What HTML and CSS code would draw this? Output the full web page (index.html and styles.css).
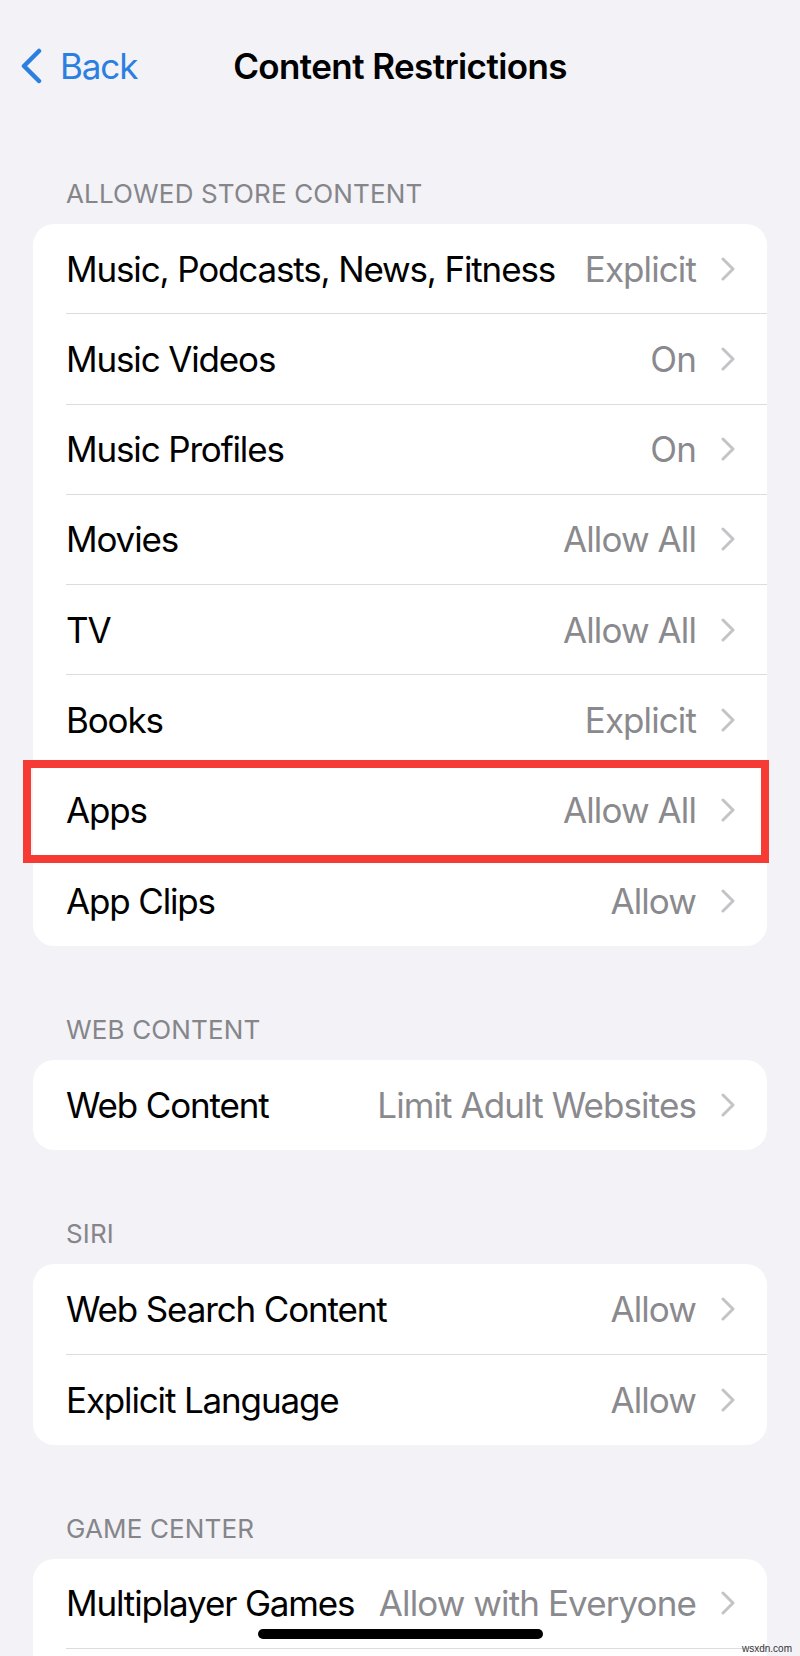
FILE: index.html
```html
<!DOCTYPE html>
<html lang="en">
<head>
    <meta charset="UTF-8">
    <meta name="viewport" content="width=device-width, initial-scale=1.0">
    <title>Content Restrictions</title>
    <link rel="stylesheet" href="styles.css">
</head>
<body>
    <div class="screen">
        <header class="nav">
            <a class="back" href="#">
                <svg class="back-icon" width="24" height="36" viewBox="0 0 24 36">
                    <path d="M20 3 L5 18 L20 33" />
                </svg>
                <span>Back</span>
            </a>
            <h1 class="nav-title">Content Restrictions</h1>
            <div></div>
        </header>

        <section class="group first">
            <h2 class="group-title">ALLOWED STORE CONTENT</h2>
            <ul class="card">
                <li class="row">
                    <div class="row-inner">
                        <span class="label">Music, Podcasts, News, Fitness</span>
                        <span class="value">Explicit</span>
                        <svg class="chev" width="14" height="24" viewBox="0 0 14 24"><path d="M2 2 L12 12 L2 22" /></svg>
                    </div>
                </li>
                <li class="row">
                    <div class="row-inner">
                        <span class="label">Music Videos</span>
                        <span class="value">On</span>
                        <svg class="chev" width="14" height="24" viewBox="0 0 14 24"><path d="M2 2 L12 12 L2 22" /></svg>
                    </div>
                </li>
                <li class="row">
                    <div class="row-inner">
                        <span class="label">Music Profiles</span>
                        <span class="value">On</span>
                        <svg class="chev" width="14" height="24" viewBox="0 0 14 24"><path d="M2 2 L12 12 L2 22" /></svg>
                    </div>
                </li>
                <li class="row">
                    <div class="row-inner">
                        <span class="label">Movies</span>
                        <span class="value">Allow All</span>
                        <svg class="chev" width="14" height="24" viewBox="0 0 14 24"><path d="M2 2 L12 12 L2 22" /></svg>
                    </div>
                </li>
                <li class="row">
                    <div class="row-inner">
                        <span class="label">TV</span>
                        <span class="value">Allow All</span>
                        <svg class="chev" width="14" height="24" viewBox="0 0 14 24"><path d="M2 2 L12 12 L2 22" /></svg>
                    </div>
                </li>
                <li class="row">
                    <div class="row-inner">
                        <span class="label">Books</span>
                        <span class="value">Explicit</span>
                        <svg class="chev" width="14" height="24" viewBox="0 0 14 24"><path d="M2 2 L12 12 L2 22" /></svg>
                    </div>
                </li>
                <li class="row">
                    <div class="row-inner">
                        <span class="label">Apps</span>
                        <span class="value">Allow All</span>
                        <svg class="chev" width="14" height="24" viewBox="0 0 14 24"><path d="M2 2 L12 12 L2 22" /></svg>
                    </div>
                    <div class="highlight"></div>
                </li>
                <li class="row">
                    <div class="row-inner">
                        <span class="label">App Clips</span>
                        <span class="value">Allow</span>
                        <svg class="chev" width="14" height="24" viewBox="0 0 14 24"><path d="M2 2 L12 12 L2 22" /></svg>
                    </div>
                </li>
            </ul>
        </section>

        <section class="group">
            <h2 class="group-title">WEB CONTENT</h2>
            <ul class="card">
                <li class="row">
                    <div class="row-inner">
                        <span class="label">Web Content</span>
                        <span class="value">Limit Adult Websites</span>
                        <svg class="chev" width="14" height="24" viewBox="0 0 14 24"><path d="M2 2 L12 12 L2 22" /></svg>
                    </div>
                </li>
            </ul>
        </section>

        <section class="group">
            <h2 class="group-title">SIRI</h2>
            <ul class="card">
                <li class="row">
                    <div class="row-inner">
                        <span class="label">Web Search Content</span>
                        <span class="value">Allow</span>
                        <svg class="chev" width="14" height="24" viewBox="0 0 14 24"><path d="M2 2 L12 12 L2 22" /></svg>
                    </div>
                </li>
                <li class="row">
                    <div class="row-inner">
                        <span class="label">Explicit Language</span>
                        <span class="value">Allow</span>
                        <svg class="chev" width="14" height="24" viewBox="0 0 14 24"><path d="M2 2 L12 12 L2 22" /></svg>
                    </div>
                </li>
            </ul>
        </section>

        <section class="group">
            <h2 class="group-title">GAME CENTER</h2>
            <ul class="card">
                <li class="row">
                    <div class="row-inner">
                        <span class="label">Multiplayer Games</span>
                        <span class="value">Allow with Everyone</span>
                        <svg class="chev" width="14" height="24" viewBox="0 0 14 24"><path d="M2 2 L12 12 L2 22" /></svg>
                    </div>
                </li>
                <!-- next row continues below the fold -->
                <li class="row">
                    <div class="row-inner"></div>
                </li>
            </ul>
        </section>

        <div class="home-indicator"></div>
        <div class="watermark">wsxdn.com</div>
    </div>
</body>
</html>
```

FILE: styles.css
```css
body {
    margin: 0;
    background-color: #f2f2f7;
    font-family: Inter, "Noto Sans", sans-serif;
    color: #000;
}
.screen {
    position: relative;
    width: 800px;
    height: 1656px;
    overflow: hidden;
}

/* top navigation */
.nav {
    height: 132px;
    display: grid;
    grid-template-columns: 1fr auto 1fr;
    align-items: center;
}
.back {
    display: flex;
    align-items: center;
    gap: 17px;
    padding-left: 19px;
    color: #2b7fe0;
    text-decoration: none;
    font-size: 35px;
    letter-spacing: -1.1px;
}
.back-icon path {
    fill: none;
    stroke: #2b7fe0;
    stroke-width: 4.5;
    stroke-linecap: round;
    stroke-linejoin: round;
}
.nav-title {
    margin: 0;
    font-size: 35px;
    font-weight: 600;
    letter-spacing: -0.6px;
}

/* grouped lists */
.group {
    margin-top: 68px;
}
.group.first {
    margin-top: 46px;
}
.group-title {
    margin: 0 0 14px;
    height: 32px;
    line-height: 32px;
    padding-left: 66px;
    font-size: 26px;
    font-weight: 400;
    color: #85858a;
    letter-spacing: 0.15px;
}
.card {
    list-style: none;
    margin: 0 33px;
    padding: 0;
    background: white;
    border-radius: 21px;
}
.row {
    position: relative;
    display: flex;
    height: 90.25px;
    padding-left: 33px;
}
.row-inner {
    flex: 1;
    display: flex;
    align-items: center;
    padding-right: 32px;
    border-bottom: 1px solid #dcdcdf;
}
.row:last-child .row-inner {
    border-bottom: none;
}
.label {
    flex: 1;
    font-size: 35px;
    letter-spacing: -1.15px;
    white-space: nowrap;
}
.value {
    margin-right: 25px;
    font-size: 35px;
    letter-spacing: -0.9px;
    color: #8a8a8e;
    white-space: nowrap;
}
.chev path {
    fill: none;
    stroke: #c4c4c7;
    stroke-width: 3;
    stroke-linecap: round;
    stroke-linejoin: round;
}

/* red annotation box around the Apps row */
.highlight {
    position: absolute;
    top: -6px;
    bottom: -7px;
    left: -10px;
    right: -2px;
    border: 8px solid #f63b34;
}

.home-indicator {
    position: absolute;
    left: 258px;
    top: 1629px;
    width: 285px;
    height: 10px;
    border-radius: 5px;
    background: #000;
}
.watermark {
    position: absolute;
    right: 8px;
    bottom: 2px;
    font-family: "Liberation Sans", sans-serif;
    font-size: 10px;
    color: #333;
}
```
